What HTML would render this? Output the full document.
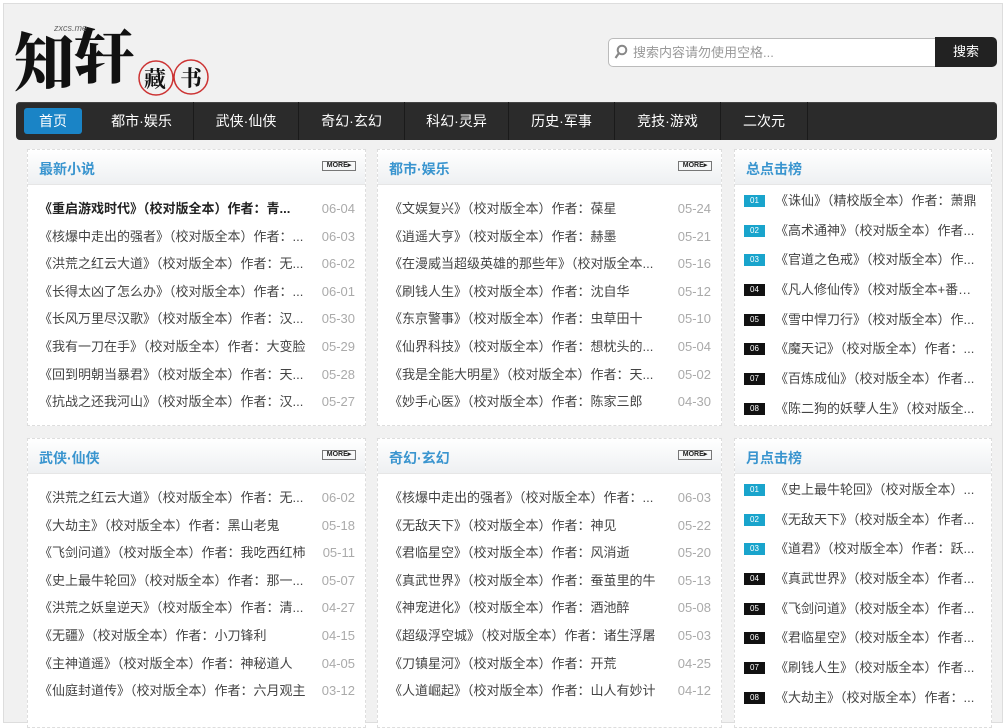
<!DOCTYPE html>
<html><head><meta charset="utf-8"><style>
*{margin:0;padding:0;box-sizing:border-box}
body{width:1006px;height:718px;overflow:hidden;background:#fff;font-family:"Liberation Sans","Noto Sans CJK SC",sans-serif;font-size:13px;color:#333}
.wrap{position:absolute;left:3px;top:3px;width:1000px;height:720px;background:#f1f1f1;border:1px solid #ddd}
.logo{position:absolute;left:14px;top:18px;width:204px;height:82px}
.search{position:absolute;left:608px;top:38px;width:328px;height:29px;border:1px solid #bbb;border-radius:5px 0 0 5px;background:#fff;color:#999;font-size:13px;line-height:27px;padding-left:24px}
.sbtn{position:absolute;left:935px;top:37px;width:62px;height:30px;background:#222;border-radius:0 5px 5px 0;color:#fff;font-size:13px;text-align:center;line-height:30px}
.nav{position:absolute;left:16px;top:102px;width:981px;height:38px;background:#2b2b2b;border-radius:4px;box-shadow:inset 0 1px 0 #444}
.nav span{position:absolute;top:0;height:38px;line-height:38px;color:#fff;font-size:14px;text-align:center;border-right:1px solid #1a1a1a}
.nav .on{background:#1a84c6;top:6px;height:26px;line-height:26px;border-radius:3px;border:none;left:8px;width:58px}
.p{position:absolute;background:#fff;border:1px dashed #ddd}
.hd{height:35px;background:linear-gradient(#fff,#eef0f2);border-bottom:1px solid #e6e6e6;position:relative}
.hd b{position:absolute;left:11px;top:9px;color:#3a95cf;font-size:14px}
.more{position:absolute;right:9px;top:11px;width:34px;height:10px;border:1px solid #777;font-size:7px;line-height:8px;font-weight:bold;text-align:center;color:#222;font-family:"Liberation Sans",sans-serif}
ul{list-style:none;padding:0 10px 0 11px;margin-top:10px}
li{height:27.6px;line-height:27.6px;white-space:nowrap;overflow:hidden;position:relative;padding-right:52px;color:#444}
li i{position:absolute;right:0;top:0;font-style:normal;color:#aaa}
.r li{padding-right:4px;height:29.7px;line-height:29.7px;padding-left:31px;text-overflow:ellipsis}
.r ul{padding:0 8px 0 9px;margin-top:1px}
.r li em{position:absolute;left:0;top:9px;width:21px;height:12px;font-style:normal;font-size:8px;line-height:12px;text-align:center;color:#fff;background:#111}
.r li em.t{background:#19a4cc}
</style></head><body><div class="wrap"></div>
<svg class="logo" viewBox="0 0 204 82">
<text x="0" y="64" font-size="60" font-family="Noto Serif CJK SC,serif" font-weight="900" fill="#111" transform="scale(1,1.05)">知</text>
<text x="60" y="60" font-size="60" font-family="Noto Serif CJK SC,serif" font-weight="900" fill="#111">轩</text>
<text x="40" y="13" font-size="9" font-style="italic" fill="#666">zxcs.me</text>
<circle cx="142" cy="60" r="17" fill="none" stroke="#c33" stroke-width="1.5"/>
<circle cx="177" cy="59" r="17" fill="none" stroke="#c33" stroke-width="1.5"/>
<text x="130" y="69" font-size="22" font-weight="bold" fill="#111" font-family="Noto Serif CJK SC,serif">藏</text>
<text x="166" y="68" font-size="22" font-weight="bold" fill="#111" font-family="Noto Serif CJK SC,serif">书</text>
</svg>
<div class="search">搜索内容请勿使用空格...</div>
<svg style="position:absolute;left:614px;top:44px" width="14" height="16" viewBox="0 0 14 16"><circle cx="8" cy="6" r="4.3" fill="none" stroke="#888" stroke-width="2"/><path d="M5 9 L1.5 14" stroke="#888" stroke-width="2.2"/></svg>
<div class="sbtn">搜索</div>
<div class="nav">
<span class="on">首页</span>
<span style="left:74px;width:104px">都市·娱乐</span>
<span style="left:178px;width:105px">武侠·仙侠</span>
<span style="left:283px;width:106px">奇幻·玄幻</span>
<span style="left:389px;width:104px">科幻·灵异</span>
<span style="left:493px;width:106px">历史·军事</span>
<span style="left:599px;width:106px">竞技·游戏</span>
<span style="left:705px;width:87px">二次元</span>
</div>

<div class="p" style="left:27px;top:149px;width:339px;height:277px"><div class="hd"><b>最新小说</b><div class="more">MORE▸</div></div><ul>
<li style="font-weight:bold;color:#222">《重启游戏时代》（校对版全本）作者：青...<i style="font-weight:normal">06-04</i></li>
<li>《核爆中走出的强者》（校对版全本）作者：...<i>06-03</i></li>
<li>《洪荒之红云大道》（校对版全本）作者：无...<i>06-02</i></li>
<li>《长得太凶了怎么办》（校对版全本）作者：...<i>06-01</i></li>
<li>《长风万里尽汉歌》（校对版全本）作者：汉...<i>05-30</i></li>
<li>《我有一刀在手》（校对版全本）作者：大变脸<i>05-29</i></li>
<li>《回到明朝当暴君》（校对版全本）作者：天...<i>05-28</i></li>
<li>《抗战之还我河山》（校对版全本）作者：汉...<i>05-27</i></li></ul></div>

<div class="p" style="left:377px;top:149px;width:345px;height:277px"><div class="hd"><b>都市·娱乐</b><div class="more">MORE▸</div></div><ul>
<li>《文娱复兴》（校对版全本）作者：葆星<i>05-24</i></li>
<li>《逍遥大亨》（校对版全本）作者：赫墨<i>05-21</i></li>
<li>《在漫威当超级英雄的那些年》（校对版全本...<i>05-16</i></li>
<li>《刷钱人生》（校对版全本）作者：沈自华<i>05-12</i></li>
<li>《东京警事》（校对版全本）作者：虫草田十<i>05-10</i></li>
<li>《仙界科技》（校对版全本）作者：想枕头的...<i>05-04</i></li>
<li>《我是全能大明星》（校对版全本）作者：天...<i>05-02</i></li>
<li>《妙手心医》（校对版全本）作者：陈家三郎<i>04-30</i></li></ul></div>

<div class="p r" style="left:734px;top:149px;width:258px;height:277px"><div class="hd"><b>总点击榜</b></div><ul>
<li><em class="t">01</em>《诛仙》（精校版全本）作者：萧鼎</li>
<li><em class="t">02</em>《高术通神》（校对版全本）作者...</li>
<li><em class="t">03</em>《官道之色戒》（校对版全本）作...</li>
<li><em>04</em>《凡人修仙传》（校对版全本+番外...</li>
<li><em>05</em>《雪中悍刀行》（校对版全本）作...</li>
<li><em>06</em>《魔天记》（校对版全本）作者：...</li>
<li><em>07</em>《百炼成仙》（校对版全本）作者...</li>
<li><em>08</em>《陈二狗的妖孽人生》（校对版全...</li></ul></div>

<div class="p" style="left:27px;top:438px;width:339px;height:290px"><div class="hd"><b>武侠·仙侠</b><div class="more">MORE▸</div></div><ul>
<li>《洪荒之红云大道》（校对版全本）作者：无...<i>06-02</i></li>
<li>《大劫主》（校对版全本）作者：黑山老鬼<i>05-18</i></li>
<li>《飞剑问道》（校对版全本）作者：我吃西红柿<i>05-11</i></li>
<li>《史上最牛轮回》（校对版全本）作者：那一...<i>05-07</i></li>
<li>《洪荒之妖皇逆天》（校对版全本）作者：清...<i>04-27</i></li>
<li>《无疆》（校对版全本）作者：小刀锋利<i>04-15</i></li>
<li>《主神道遥》（校对版全本）作者：神秘道人<i>04-05</i></li>
<li>《仙庭封道传》（校对版全本）作者：六月观主<i>03-12</i></li></ul></div>

<div class="p" style="left:377px;top:438px;width:345px;height:290px"><div class="hd"><b>奇幻·玄幻</b><div class="more">MORE▸</div></div><ul>
<li>《核爆中走出的强者》（校对版全本）作者：...<i>06-03</i></li>
<li>《无敌天下》（校对版全本）作者：神见<i>05-22</i></li>
<li>《君临星空》（校对版全本）作者：风消逝<i>05-20</i></li>
<li>《真武世界》（校对版全本）作者：蚕茧里的牛<i>05-13</i></li>
<li>《神宠进化》（校对版全本）作者：酒池醉<i>05-08</i></li>
<li>《超级浮空城》（校对版全本）作者：诸生浮屠<i>05-03</i></li>
<li>《刀镇星河》（校对版全本）作者：开荒<i>04-25</i></li>
<li>《人道崛起》（校对版全本）作者：山人有妙计<i>04-12</i></li></ul></div>

<div class="p r" style="left:734px;top:438px;width:258px;height:290px"><div class="hd"><b>月点击榜</b></div><ul>
<li><em class="t">01</em>《史上最牛轮回》（校对版全本）...</li>
<li><em class="t">02</em>《无敌天下》（校对版全本）作者...</li>
<li><em class="t">03</em>《道君》（校对版全本）作者：跃...</li>
<li><em>04</em>《真武世界》（校对版全本）作者...</li>
<li><em>05</em>《飞剑问道》（校对版全本）作者...</li>
<li><em>06</em>《君临星空》（校对版全本）作者...</li>
<li><em>07</em>《刷钱人生》（校对版全本）作者...</li>
<li><em>08</em>《大劫主》（校对版全本）作者：...</li></ul></div>
</body></html>
